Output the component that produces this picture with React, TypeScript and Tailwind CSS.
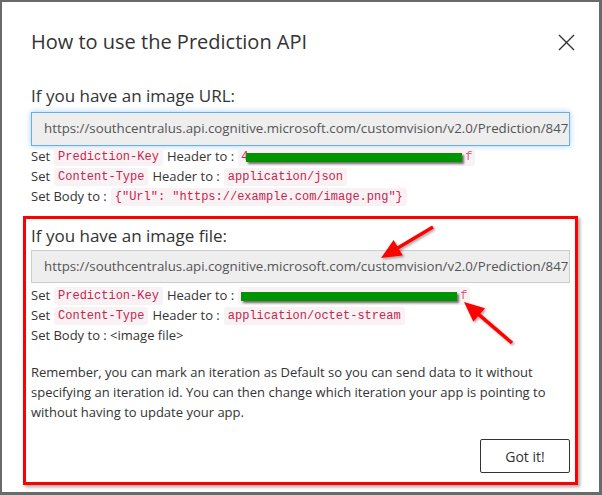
import React from 'react';

const sans = { fontFamily: '"Open Sans", "Noto Sans", sans-serif' };

const Code: React.FC<{ children: React.ReactNode }> = ({ children }) => (
  <code className="mx-[4px] rounded-[3px] bg-[#f9f2f4] px-[4px] py-[1px] font-['Liberation_Mono',monospace] text-[12px] leading-[16px] text-[#c7254e]">
    {children}
  </code>
);

const Redacted: React.FC<{ width: number; lead?: string; tail?: string }> = ({ width, lead, tail }) => (
  <code className="mx-[4px] inline-flex items-center rounded-[3px] bg-[#f9f2f4] px-[3px] font-['Liberation_Mono',monospace] text-[12px] leading-[18px] text-[#c7254e]">
    {lead && <span className="w-[5px]">{lead}</span>}
    <span
      className="inline-block h-[9px] bg-[#009500] shadow-[2px_2px_2px_rgba(0,0,0,0.55)]"
      style={{ width }}
    />
    <span className="ml-[3px] w-[7px] opacity-70">{tail}</span>
  </code>
);

const Line: React.FC<{ children: React.ReactNode }> = ({ children }) => (
  <p className="flex h-[20px] items-center whitespace-nowrap">{children}</p>
);

const Arrow: React.FC<{ x1: number; y1: number; x2: number; y2: number }> = ({ x1, y1, x2, y2 }) => {
  const dx = x2 - x1;
  const dy = y2 - y1;
  const len = Math.hypot(dx, dy);
  const ux = dx / len;
  const uy = dy / len;
  const head = 20;
  const half = 9;
  const bx = x2 - ux * head;
  const by = y2 - uy * head;
  const pts = `${x2},${y2} ${bx - uy * half},${by + ux * half} ${bx + uy * half},${by - ux * half}`;
  return (
    <g>
      <line x1={x1} y1={y1} x2={bx + ux * 2} y2={by + uy * 2} stroke="#f00" strokeWidth={3.5} />
      <polygon points={pts} fill="#f00" />
    </g>
  );
};

const url = 'https://southcentralus.api.cognitive.microsoft.com/customvision/v2.0/Prediction/847a1b2c';

export default function App() {
  return (
    <div
      className="relative flex h-[495px] w-[602px] flex-col overflow-hidden border-2 border-b-[3px] border-r-[3px] border-[#6a6a6a] bg-white px-[29px] text-[#333]"
      style={sans}
    >
      <div className="mt-[26px] flex h-[28px] items-center justify-between">
        <h1 className="text-[20px] leading-[28px] text-[#333]">How to use the Prediction API</h1>
        <svg className="-mr-[5px] h-[17px] w-[17px]" viewBox="0 0 17 17">
          <path d="M1 1L16 16M16 1L1 16" stroke="#333" strokeWidth="1.4" fill="none" />
        </svg>
      </div>

      <h2 className="mt-[28px] text-[17px] leading-[24px]">If you have an image URL:</h2>
      <div className="mt-[4px] flex h-[34px] items-center overflow-hidden whitespace-nowrap border border-[#66afe9] bg-[#eeeeee] px-[12px] text-[13.3px] text-[#555] shadow-[0_0_6px_rgba(102,175,233,0.6)]">
        {url}
      </div>
      <div className="mt-[1px] text-[13px]">
        <Line>
          Set<Code>Prediction-Key</Code>Header to :<Redacted width={216} lead="4" tail="f" />
        </Line>
        <Line>
          Set<Code>Content-Type</Code>Header to :<Code>application/json</Code>
        </Line>
        <Line>
          Set Body to :<Code>{'{"Url": "https://example.com/image.png"}'}</Code>
        </Line>
      </div>

      <div className="-mx-[8px] mt-[9px] flex flex-col border-[3px] border-[#ff0000] px-[5px] pb-[9px] pt-[5px] shadow-[2px_2px_3px_rgba(0,0,0,0.35)]">
        <h2 className="text-[17px] leading-[24px]">If you have an image file:</h2>
        <div className="mt-[2px] flex h-[33px] items-center overflow-hidden whitespace-nowrap border border-[#cccccc] bg-[#eeeeee] px-[12px] text-[13.3px] text-[#555]">
          {url}
        </div>
        <div className="mt-[3px] text-[13px]">
          <Line>
            Set<Code>Prediction-Key</Code>Header to :<Redacted width={216} tail="f" />
          </Line>
          <Line>
            Set<Code>Content-Type</Code>Header to :<Code>application/octet-stream</Code>
          </Line>
          <Line>Set Body to : &lt;image file&gt;</Line>
        </div>
        <p className="mt-[16px] pr-[6px] text-[13px] leading-[20px]">
          Remember, you can mark an iteration as Default so you can send data to it without specifying an
          iteration id. You can then change which iteration your app is pointing to without having to update
          your app.
        </p>
        <div className="mt-[17px] flex justify-end">
          <button className="h-[34px] w-[90px] rounded-[2px] border border-[#333] bg-white text-[14px] text-[#333]">
            Got it!
          </button>
        </div>
      </div>

      <svg className="pointer-events-none absolute left-[-2px] top-[-2px] h-[495px] w-[602px]" viewBox="0 0 602 495">
        <defs>
          <filter id="sh" x="-20%" y="-20%" width="140%" height="140%">
            <feDropShadow dx="1.5" dy="1.5" stdDeviation="1" floodColor="#000" floodOpacity="0.35" />
          </filter>
        </defs>
        <g filter="url(#sh)">
          <Arrow x1={433} y1={227} x2={381} y2={258} />
          <Arrow x1={512} y1={343} x2={464} y2={302} />
        </g>
      </svg>
    </div>
  );
}
